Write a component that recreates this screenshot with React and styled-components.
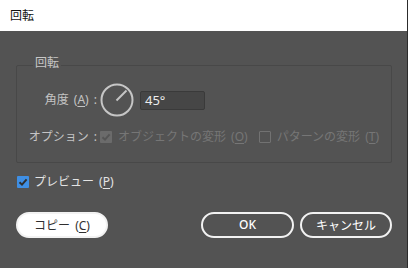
import React from 'react'
import styled, { createGlobalStyle } from 'styled-components'

const GlobalStyle = createGlobalStyle`
  html, body {
    margin: 0;
    padding: 0;
    background: #535353;
  }
  * {
    box-sizing: border-box;
  }
`

const FONT = `"Noto Sans", "Noto Sans CJK JP", sans-serif`

const Window = styled.div`
  width: 408px;
  height: 268px;
  display: flex;
  flex-direction: column;
  background: #535353;
  border-right: 1px solid #2c2c2c;
  font-family: ${FONT};
  font-size: 12px;
  word-spacing: 2px;
  color: #c8c8c8;
`

const TitleBar = styled.div`
  height: 31px;
  flex: 0 0 31px;
  background: #ffffff;
  color: #111111;
  display: flex;
  align-items: center;
  padding-left: 10px;
  padding-bottom: 1px;
  font-size: 12px;
`

const Body = styled.div`
  flex: 1;
  display: flex;
  flex-direction: column;
  padding: 25px 15px 0 16px;
`

const Group = styled.fieldset`
  margin: 0;
  padding: 0 0 18px 9px;
  border: 1px solid #484848;
  border-radius: 2px;
  min-width: 0;
`

const Legend = styled.legend`
  margin-left: 7px;
  padding: 0 2px 4px;
  line-height: 14px;
  color: #c8c8c8;
`

const Grid = styled.div`
  margin-top: 9px;
  display: grid;
  grid-template-columns: 71px auto;
  column-gap: 3px;
  row-gap: 13px;
  align-items: center;
`

const Label = styled.div`
  text-align: right;
  white-space: nowrap;
  line-height: 14px;
  color: #c4c4c4;
`

const Cell = styled.div`
  display: flex;
  align-items: center;
  gap: ${p => p.$gap || 6}px;
`

const Key = styled.span`
  text-decoration: underline;
  text-underline-offset: 2px;
`

const Input = styled.div`
  width: 65px;
  height: 19px;
  background: #464646;
  border: 1px solid #3a3a3a;
  border-radius: 2px;
  color: #ececec;
  font-size: 13px;
  line-height: 17px;
  padding-left: 4px;
`

const Check = styled.span`
  width: 12px;
  height: 12px;
  flex: 0 0 12px;
  display: inline-flex;
  align-items: center;
  justify-content: center;
  border-radius: 1px;
  background: ${p => (p.$on ? (p.$disabled ? '#6b6b6b' : '#3f8fe4') : 'transparent')};
  border: ${p => (p.$on ? 'none' : '1px solid #727272')};
`

const Option = styled.span`
  display: inline-flex;
  align-items: center;
  gap: 6px;
  line-height: 14px;
  white-space: nowrap;
  color: ${p => (p.$disabled ? '#767676' : '#e2e2e2')};
`

const PreviewRow = styled.div`
  margin-top: 12px;
  margin-left: 1px;
  display: flex;
  align-items: center;
  gap: 5px;
  line-height: 14px;
  color: #e4e4e4;
`

const Buttons = styled.div`
  margin-top: 23px;
  display: flex;
  align-items: center;
  gap: 6px;
`

const Spacer = styled.div`
  flex: 1;
`

const Button = styled.div`
  width: ${p => p.$w || 92}px;
  height: 26px;
  border-radius: 13px;
  border: 2px solid #f2f2f2;
  background: ${p => (p.$filled ? '#ffffff' : 'transparent')};
  color: ${p => (p.$filled ? '#2f2f2f' : '#ffffff')};
  display: flex;
  align-items: center;
  justify-content: center;
  font-size: 12px;
  font-weight: ${p => (p.$bold ? 500 : 400)};
  padding-bottom: 1px;
`

const Dial = () => (
  <svg width="34" height="34" viewBox="0 0 34 34">
    <circle cx="17" cy="17" r="15.5" fill="none" stroke="#c6c6c6" strokeWidth="2" />
    <line x1="16.5" y1="17.5" x2="26.5" y2="7.5" stroke="#c6c6c6" strokeWidth="2" />
  </svg>
)

const Tick = ({ color }) => (
  <svg width="10" height="10" viewBox="0 0 10 10">
    <path d="M1.5 5.2 L4 7.6 L8.6 2.4" fill="none" stroke={color} strokeWidth="2" />
  </svg>
)

export default function App() {
  return (
    <>
      <GlobalStyle />
      <Window>
        <TitleBar>回転</TitleBar>
        <Body>
          <Group>
            <Legend>回転</Legend>
            <Grid>
              <Label>
                角度 (<Key>A</Key>) :
              </Label>
              <Cell>
                <Dial />
                <Input>45°</Input>
              </Cell>
              <Label>オプション :</Label>
              <Cell $gap={11}>
                <Option $disabled>
                  <Check $on $disabled>
                    <Tick color="#555555" />
                  </Check>
                  <span>
                    オブジェクトの変形 (<Key>O</Key>)
                  </span>
                </Option>
                <Option $disabled>
                  <Check />
                  <span>
                    パターンの変形 (<Key>T</Key>)
                  </span>
                </Option>
              </Cell>
            </Grid>
          </Group>
          <PreviewRow>
            <Check $on>
              <Tick color="#2e2e2e" />
            </Check>
            <span>
              プレビュー (<Key>P</Key>)
            </span>
          </PreviewRow>
          <Buttons>
            <Button $filled>
              <span>
                コピー (<Key>C</Key>)
              </span>
            </Button>
            <Spacer />
            <Button $w={93} $bold>OK</Button>
            <Button>キャンセル</Button>
          </Buttons>
        </Body>
      </Window>
    </>
  )
}
